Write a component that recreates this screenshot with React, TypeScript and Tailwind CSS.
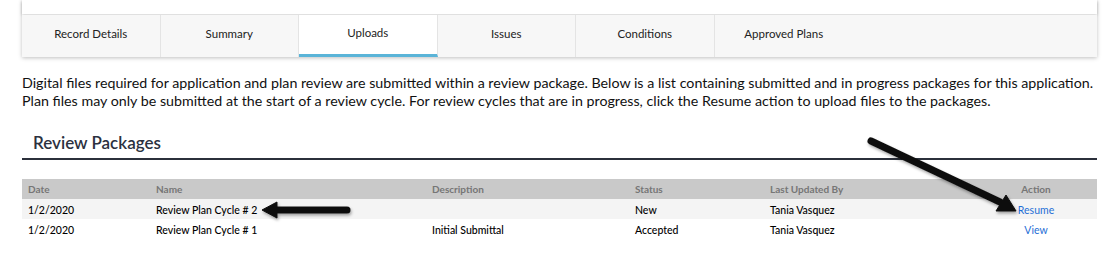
const tabs = ["Record Details", "Summary", "Uploads", "Issues", "Conditions", "Approved Plans"];

const rows = [
  { date: "1/2/2020", name: "Review Plan Cycle # 2", desc: "", status: "New", by: "Tania Vasquez", action: "Resume" },
  { date: "1/2/2020", name: "Review Plan Cycle # 1", desc: "Initial Submittal", status: "Accepted", by: "Tania Vasquez", action: "View" },
];

const cols = "grid grid-cols-[128px_276px_203px_135px_211px_122px]";

const Arrows = () => (
  <svg
    className="absolute left-0 top-0 pointer-events-none"
    width="1118"
    height="261"
    viewBox="0 0 1118 261"
  >
    <defs>
      <filter id="sh" x="-20%" y="-20%" width="140%" height="160%">
        <feDropShadow dx="1" dy="2" stdDeviation="1.5" floodColor="#000" floodOpacity="0.35" />
      </filter>
    </defs>
    <g filter="url(#sh)" fill="#111" stroke="#111">
      <line x1="274" y1="210" x2="347" y2="210" strokeWidth="7" strokeLinecap="round" />
      <polygon points="262,210 277,202 277,218" strokeWidth="1" strokeLinejoin="round" />
      <line x1="871" y1="141" x2="1000" y2="202" strokeWidth="7" strokeLinecap="round" />
      <polygon points="1016,211 996,211 1006,195" strokeWidth="1" strokeLinejoin="round" />
    </g>
  </svg>
);

const App = () => {
  return (
    <div
      className="relative w-[1118px] h-[261px] overflow-hidden bg-white text-[#111]"
      style={{ fontFamily: "Lato, 'Open Sans', sans-serif" }}
    >
      <div className="ml-[22px] w-[1075px] shadow-[0_1px_4px_rgba(0,0,0,0.25)]">
        <div className="h-[14px] bg-white shadow-[0_1px_3px_rgba(0,0,0,0.2)]" />
        <div className="mt-[1px] flex h-[42px] bg-[#f7f7f7]">
          {tabs.map((t, i) => (
            <div
              key={t}
              className={`flex w-[138.5px] items-center justify-center pb-[4px] text-[11.5px] text-[#222] ${
                i < 5 ? "border-r border-[#e4e4e4]" : ""
              } ${t === "Uploads" ? "bg-white border-b-[3px] border-b-[#5ab4d8] pb-[1px]" : ""}`}
            >
              {t}
            </div>
          ))}
        </div>
      </div>

      <p className="ml-[22px] mt-[17px] whitespace-nowrap text-[14.25px] leading-[18px] text-[#111]">
        Digital files required for application and plan review are submitted within a review package. Below is a list
        containing submitted and in progress packages for this application.
        <br />
        Plan files may only be submitted at the start of a review cycle. For review cycles that are in progress, click
        the Resume action to upload files to the packages.
      </p>

      <div className="ml-[22px] mt-[21px] w-[1075px]">
        <h2 className="border-b-2 border-[#2b303b] pb-[3px] pl-[11px] text-[17px] font-semibold leading-[24px] text-[#2b3140]">
          Review Packages
        </h2>

        <div className="mt-[19px] text-[10px]">
          <div className={`${cols} h-[20px] items-center bg-[#c9c9c9] font-bold text-[#767676]`}>
            <div className="pl-[6px]">Date</div>
            <div className="pl-[6px]">Name</div>
            <div className="pl-[6px]">Description</div>
            <div className="pl-[6px]">Status</div>
            <div className="pl-[6px]">Last Updated By</div>
            <div className="text-center">Action</div>
          </div>
          {rows.map((r, i) => (
            <div
              key={r.name}
              className={`${cols} h-[20px] items-center pt-[3px] text-[10.5px] font-medium text-[#000] ${i === 0 ? "bg-[#f4f4f4]" : "bg-white"}`}
            >
              <div className="pl-[6px]">{r.date}</div>
              <div className="pl-[6px]">{r.name}</div>
              <div className="pl-[6px]">{r.desc}</div>
              <div className="pl-[6px]">{r.status}</div>
              <div className="pl-[6px]">{r.by}</div>
              <div className="text-center font-normal text-[#1f6fd6]">{r.action}</div>
            </div>
          ))}
        </div>
      </div>

      <Arrows />
    </div>
  );
};

export default App;
